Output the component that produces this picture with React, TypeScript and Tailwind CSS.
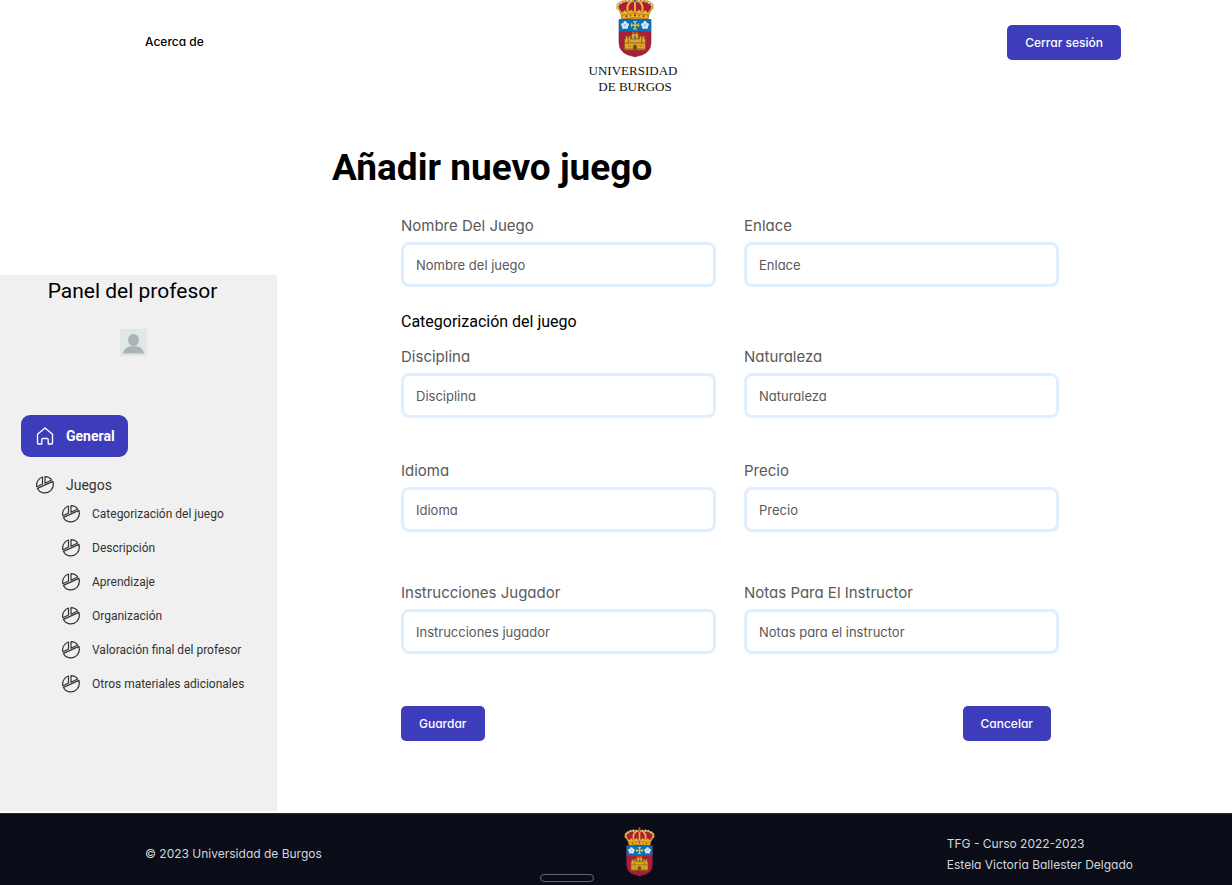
import React from "react";

const sans = "font-['Roboto',sans-serif]";
const geometric = "font-['Inter',sans-serif] [font-feature-settings:'cv11'_1]";

const RED = "#a91f3b";
const GOLD = "#f2b22a";
const DARK_GOLD = "#8a5a10";

function Crest({ className }: { className: string }) {
  return (
    <svg viewBox="0 0 38 62" className={className} role="img" aria-label="Escudo de la Universidad de Burgos">
      <path d="M6 20 2 12Q1 8 5 7l6-2.500 8-1 8 1L33 7q4 1 3 5l-4 8Z" fill={RED} />
      <path d="M6.500 19 2 12Q.5 8 4.500 7q5-3.500 9.500-1 5-2.500 10 0 4.500-2.500 9.500 1 4 1 2.500 5l-4.500 7" fill="none" stroke={GOLD} strokeWidth="2" />
      <path d="M12.500 17Q9.500 11 14 6M25.500 17q3-6-1.500-11M19 5v12" fill="none" stroke={GOLD} strokeWidth="2" />
      <g fill="#fbe9bb" stroke={DARK_GOLD} strokeWidth=".5">
        <circle cx="1.800" cy="12" r="1.200" /><circle cx="2.300" cy="9" r="1.300" /><circle cx="4.800" cy="6.700" r="1.300" /><circle cx="8" cy="5" r="1.300" />
        <circle cx="11.500" cy="4.300" r="1.300" /><circle cx="15" cy="4.800" r="1.300" /><circle cx="23" cy="4.800" r="1.300" />
        <circle cx="26.500" cy="4.300" r="1.300" /><circle cx="30" cy="5" r="1.300" /><circle cx="33.200" cy="6.700" r="1.300" />
        <circle cx="35.700" cy="9" r="1.300" /><circle cx="36.200" cy="12" r="1.200" />
      </g>
      <path d="M19 0v5M17.300 1.600h3.400" stroke={DARK_GOLD} strokeWidth="1.200" />
      <circle cx="19" cy="5" r="1.700" fill="#0b73b5" stroke={GOLD} strokeWidth=".7" />
      <path d="m3.500 13 2.700 3.500 2.500-2.500 3.300 2.500 3-3 4 3.500 4-3.500 3 3 3.300-2.500 2.500 2.500 2.700-3.500-2.500 10H6Z" fill={GOLD} stroke={DARK_GOLD} strokeWidth=".5" />
      <path d="M6 19q13-3 26 0v4q-13-3-26 0Z" fill={GOLD} stroke={DARK_GOLD} strokeWidth=".6" />
      <g fill={RED}><circle cx="10.500" cy="20.300" r="1" /><circle cx="19" cy="19.300" r="1.100" /><circle cx="27.500" cy="20.300" r="1" /></g>
      <g fill="#0b73b5"><circle cx="14.700" cy="19.700" r=".8" /><circle cx="23.300" cy="19.700" r=".8" /></g>
      <path d="M3 23.500h32v23q0 9-9 12.500-5 1-7 2-2-1-7-2-9-3.500-9-12.500Z" fill={RED} stroke="#7b2738" strokeWidth=".6" />
      <path d="M3 23h32v12.500H3Z" fill="#0870b7" />
      <g fill="#dfeaf1">
        <circle cx="9" cy="26.800" r="1.700" /><circle cx="6.700" cy="28.700" r="1.700" /><circle cx="11.300" cy="28.700" r="1.700" />
        <circle cx="7.700" cy="31.200" r="1.700" /><circle cx="10.300" cy="31.200" r="1.700" />
        <circle cx="29" cy="26.800" r="1.700" /><circle cx="26.700" cy="28.700" r="1.700" /><circle cx="31.300" cy="28.700" r="1.700" />
        <circle cx="27.700" cy="31.200" r="1.700" /><circle cx="30.300" cy="31.200" r="1.700" />
      </g>
      <g fill="#a9cbe0"><circle cx="9" cy="29.300" r="1.300" /><circle cx="29" cy="29.300" r="1.300" /></g>
      <path d="M19 25.500v7.500M15.300 29.200h7.400" stroke="#d9bd55" strokeWidth="1.600" />
      <path d="M17 25.600h4M17 32.900h4M15.500 27.300v3.800M22.500 27.300v3.800" stroke="#d9bd55" strokeWidth="1.300" />
      <path d="M8.500 54V43h1v-3h2v2h1v-2h2v3h1v-5h1v-2H18v2h2v-2h1.500v2h1v5h1v-3h2v2h1v-2h2v3h1v11Z" fill="#dda52b" stroke={DARK_GOLD} strokeWidth=".7" />
      <path d="M8.500 47h21M12.500 43v4M25.500 43v4M15.500 43h7M12.500 50h2M23.500 50h2M8.500 53h21" stroke={DARK_GOLD} strokeWidth=".8" />
      <path d="M17 54v-4q2-3 4 0v4Z" fill="#74501b" />
      <path d="M18.200 40h1.600v3h-1.600Z" fill="#2770a3" />
    </svg>
  );
}

function HomeIcon() {
  return (
    <svg viewBox="0 0 18 18" className="size-[18px] shrink-0" fill="none" stroke="currentColor" strokeWidth="1.300" strokeLinejoin="round" aria-hidden="true">
      <path d="M1.500 7.200 9 1l7.500 6.200V16q0 1-1 1h-3.300v-4.500q0-1-1-1H6.800q-1 0-1 1V17H2.500q-1 0-1-1Z" />
    </svg>
  );
}

function PieIcon() {
  return (
    <svg viewBox="0 0 18 18" className="size-[18px] shrink-0" fill="none" stroke="currentColor" strokeWidth="1.200" strokeLinejoin="round" aria-hidden="true">
      <path d="M6.500 1V8L.8 10.700Q.2 7.200 1.800 4.700 3.500 1.900 6.500 1Z" />
      <path d="M9 .7q4.300.1 6.700 3.300L9 7.200Z" />
      <path d="M16.900 5.400q1.500 5.200-2 8.900-3.500 3.500-8.300 2.300-3.700-1-5.200-4.200Z" />
    </svg>
  );
}

function Avatar() {
  return (
    <svg viewBox="0 0 27 27" className="size-[27px]" role="img" aria-label="Profesor">
      <path d="M0 0h27v27H0Z" fill="#e1e6e6" />
      <ellipse cx="13.500" cy="11" rx="5.500" ry="6" fill="#aab4b5" />
      <path d="M3 24.500q1-7.500 10.500-7.500T24 24.500Z" fill="#aab4b5" />
    </svg>
  );
}

function Action({ children, type = "button" }: { children: string; type?: "button" | "submit" }) {
  return (
    <button type={type} className={`${geometric} h-[35px] rounded-[5px] bg-[#3d3dbb] px-[18px] text-[12px] font-medium text-white`}>
      {children}
    </button>
  );
}

function Field({ id, label, placeholder }: { id: string; label: string; placeholder: string }) {
  return (
    <div className={`${geometric} flex flex-col gap-1 text-[#595959]`}>
      <label htmlFor={id} className="text-[15px] leading-6">{label}</label>
      <input id={id} placeholder={placeholder} className="h-[45px] w-full rounded-lg border-3 border-[#dfefff] bg-white px-3 text-[13px] placeholder:text-[#595959]" />
    </div>
  );
}

const sections = ["Categorización del juego", "Descripción", "Aprendizaje", "Organización", "Valoración final del profesor", "Otros materiales adicionales"];

export default function App() {
  return (
    <div className={`${sans} flex min-h-screen flex-col bg-white text-black`}>
      <header className="grid h-[100px] grid-cols-[1fr_auto_1fr] pr-[111px] pl-[145px]">
        <a href="#acerca" className={`${geometric} mt-[32px] justify-self-start text-[12px] leading-5 font-medium`}>Acerca de</a>
        <div className="flex flex-col items-center">
          <Crest className="-mt-1 ml-1 h-[62px] w-[38px]" />
          <p className="mt-[5px] text-center font-['Liberation_Serif',serif] text-[13px] leading-4 text-[#111]">UNIVERSIDAD<br /><span className="pl-1">DE BURGOS</span></p>
        </div>
        <div className="mt-[25px] justify-self-end"><Action>Cerrar sesión</Action></div>
      </header>

      <div className="flex grow">
        <aside className="mt-[175px] mb-[2px] w-[277px] shrink-0 bg-[#f0f0f0]">
          <h2 className="pt-[3px] pr-3 text-center text-[21px] leading-[26px]">Panel del profesor</h2>
          <div className="mt-[25px] flex justify-center pr-[10px]"><Avatar /></div>
          <nav className="mt-[59px] pl-[21px] text-[#333]">
            <a href="#general" className="flex h-[42px] w-[107px] items-center gap-3 rounded-[9px] bg-[#3d3dbb] pl-[15px] text-[14px] font-bold text-white">
              <HomeIcon />General
            </a>
            <a href="#juegos" className="mt-[18px] flex h-5 items-center gap-3 pl-[15px] text-[14px]"><PieIcon />Juegos</a>
            <ul className="mt-[2px] pl-[41px]">
              {sections.map((name) => (
                <li key={name}><a href="#juegos" className="flex h-[34px] items-center gap-3 text-[12px]"><PieIcon />{name}</a></li>
              ))}
            </ul>
          </nav>
        </aside>

        <main className="grow pt-[45px] pr-[173px] pl-[55px]">
          <h1 className="text-[37px] leading-[46px] font-bold">Añadir nuevo juego</h1>
          <form className="pt-[23px] pl-[69px]" onSubmit={(event) => event.preventDefault()}>
            <div className="grid grid-cols-2 gap-x-7">
              <Field id="nombre" label="Nombre Del Juego" placeholder="Nombre del juego" />
              <Field id="enlace" label="Enlace" placeholder="Enlace" />
            </div>
            <h2 className="mt-[23px] text-[16px] leading-6">Categorización del juego</h2>
            <div className="mt-[11px] grid grid-cols-2 gap-x-7 gap-y-[41px]">
              <Field id="disciplina" label="Disciplina" placeholder="Disciplina" />
              <Field id="naturaleza" label="Naturaleza" placeholder="Naturaleza" />
              <Field id="idioma" label="Idioma" placeholder="Idioma" />
              <Field id="precio" label="Precio" placeholder="Precio" />
            </div>
            <div className="mt-[49px] grid grid-cols-2 gap-x-7">
              <Field id="instrucciones" label="Instrucciones Jugador" placeholder="Instrucciones jugador" />
              <Field id="notas" label="Notas Para El Instructor" placeholder="Notas para el instructor" />
            </div>
            <div className="mt-[52px] mb-[70px] flex justify-between pr-2">
              <Action type="submit">Guardar</Action>
              <Action>Cancelar</Action>
            </div>
          </form>
        </main>
      </div>

      <footer className={`${geometric} relative grid h-[72px] grid-cols-[1fr_auto_1fr] items-center overflow-hidden border-t border-[#292c35] bg-[#0a0d17] pt-2 pr-[99px] pl-[145px] text-[12px] text-[#d5d7de]`}>
        <p>© 2023 Universidad de Burgos</p>
        <Crest className="-mt-1 h-[50px] w-[31px]" />
        <p className="justify-self-end leading-[21px]">TFG - Curso 2022-2023<br />Estela Victoria Ballester Delgado</p>
        <span className="absolute bottom-[3px] left-[540px] h-2 w-[54px] rounded-full border border-[#666870]" />
      </footer>
    </div>
  );
}
